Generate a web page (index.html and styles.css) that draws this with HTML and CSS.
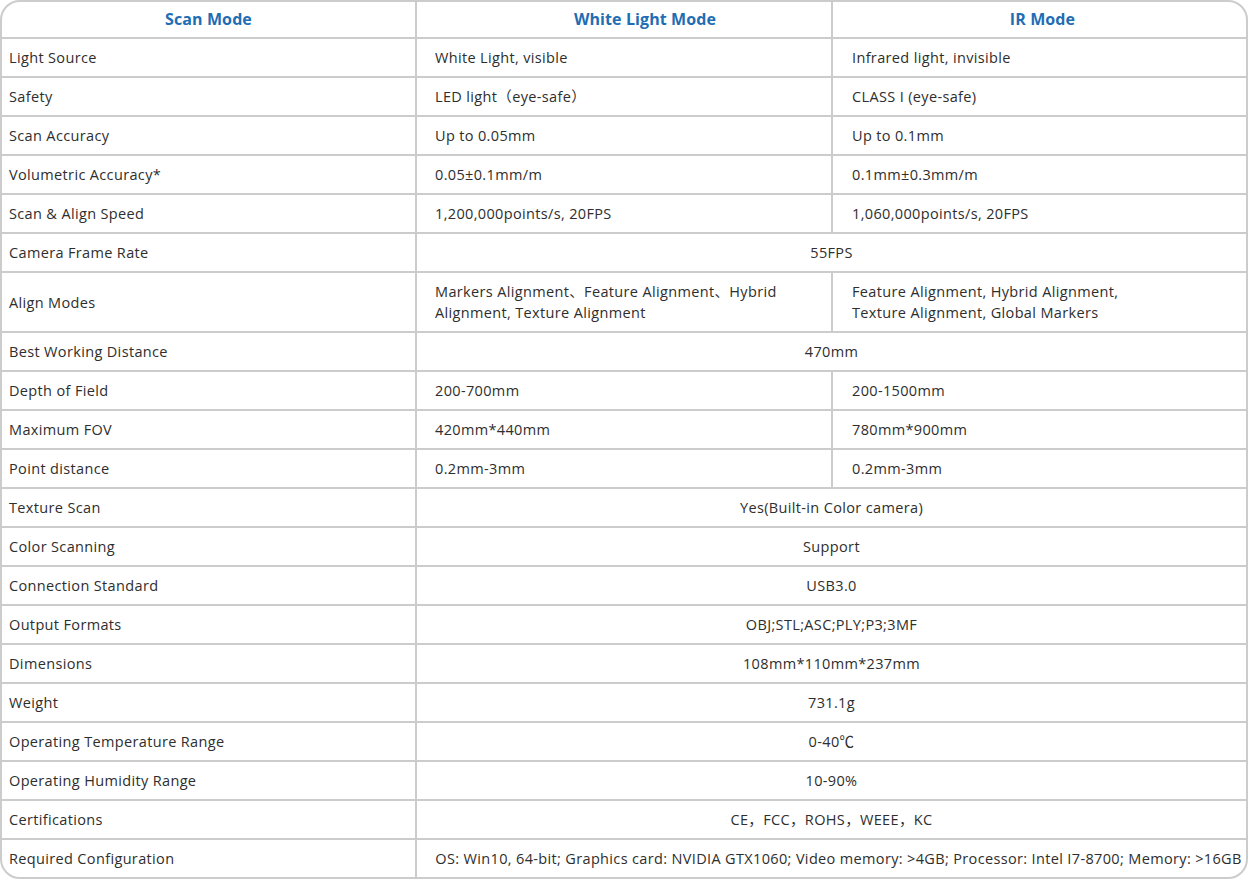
FILE: index.html
```html
<!DOCTYPE html>
<html lang="en">
<head>
<meta charset="utf-8">
<title>Specs</title>
<link rel="stylesheet" href="styles.css">
</head>
<body>
<div class="frame">
<table class="spec">
<colgroup><col class="c1"><col class="c2"><col class="c3"></colgroup>
<thead>
<tr><th>Scan Mode</th><th class="shift">White Light Mode</th><th>IR Mode</th></tr>
</thead>
<tbody>
<tr><td>Light Source</td><td>White Light, visible</td><td>Infrared light, invisible</td></tr>
<tr><td>Safety</td><td>LED light（eye-safe）</td><td>CLASS I (eye-safe)</td></tr>
<tr><td>Scan Accuracy</td><td>Up to 0.05mm</td><td>Up to 0.1mm</td></tr>
<tr><td>Volumetric Accuracy*</td><td>0.05±0.1mm/m</td><td>0.1mm±0.3mm/m</td></tr>
<tr><td>Scan &amp; Align Speed</td><td>1,200,000points/s, 20FPS</td><td>1,060,000points/s, 20FPS</td></tr>
<tr><td>Camera Frame Rate</td><td colspan="2" class="mid">55FPS</td></tr>
<tr><td>Align Modes</td><td>Markers Alignment、Feature Alignment、Hybrid<br>Alignment, Texture Alignment</td><td>Feature Alignment, Hybrid Alignment,<br>Texture Alignment, Global Markers</td></tr>
<tr><td>Best Working Distance</td><td colspan="2" class="mid">470mm</td></tr>
<tr><td>Depth of Field</td><td>200-700mm</td><td>200-1500mm</td></tr>
<tr><td>Maximum FOV</td><td>420mm*440mm</td><td>780mm*900mm</td></tr>
<tr><td>Point distance</td><td>0.2mm-3mm</td><td>0.2mm-3mm</td></tr>
<tr><td>Texture Scan</td><td colspan="2" class="mid">Yes(Built-in Color camera)</td></tr>
<tr><td>Color Scanning</td><td colspan="2" class="mid">Support</td></tr>
<tr><td>Connection Standard</td><td colspan="2" class="mid">USB3.0</td></tr>
<tr><td>Output Formats</td><td colspan="2" class="mid">OBJ;STL;ASC;PLY;P3;3MF</td></tr>
<tr><td>Dimensions</td><td colspan="2" class="mid">108mm*110mm*237mm</td></tr>
<tr><td>Weight</td><td colspan="2" class="mid">731.1g</td></tr>
<tr><td>Operating Temperature Range</td><td colspan="2" class="mid">0-40℃</td></tr>
<tr><td>Operating Humidity Range</td><td colspan="2" class="mid">10-90%</td></tr>
<tr><td>Certifications</td><td colspan="2" class="mid">CE，FCC，ROHS，WEEE，KC</td></tr>
<tr><td>Required Configuration</td><td colspan="2" class="mid tight">OS: Win10, 64-bit; Graphics card: NVIDIA GTX1060; Video memory: &gt;4GB; Processor: Intel I7-8700; Memory: &gt;16GB</td></tr>
</tbody>
</table>
</div>
</body>
</html>
```
FILE: styles.css
```css
html, body {
  margin: 0;
  padding: 0;
  background: #ffffff;
}
body {
  font-family: "Open Sans", "Noto Sans CJK SC", sans-serif;
  color: #2e2e2e;
}
.frame {
  width: 1248px;
  box-sizing: border-box;
  border: 2px solid #cccccc;
  border-radius: 20px;
  overflow: hidden;
}
.spec {
  width: 100%;
  table-layout: fixed;
  border-collapse: separate;
  border-spacing: 0;
  font-size: 14.5px;
  letter-spacing: 0.35px;
  line-height: 21px;
}
.c1 { width: 415px; }
.c2 { width: 416px; }
.c3 { width: auto; }
.spec th,
.spec td {
  border-right: 2px solid #cccccc;
  border-bottom: 2px solid #cccccc;
  padding: 8px 6px 8px 18px;
  text-align: left;
  font-weight: 400;
  vertical-align: middle;
}
.spec th:last-child,
.spec td:last-child {
  border-right: none;
}
.spec tbody tr:last-child td {
  border-bottom: none;
}
.spec td:first-child {
  padding-left: 7px;
}
.spec td:nth-child(3) {
  padding-left: 19px;
}
.spec th {
  text-align: center;
  color: #1f6db3;
  font-weight: 700;
  font-size: 16px;
  letter-spacing: 0.1px;
  line-height: 21px;
  padding: 7px 0 7px 0;
}
.spec th.shift {
  padding-left: 42px;
}
.spec th:last-child {
  padding-left: 6px;
}
.spec td.mid {
  text-align: center;
  padding-left: 0;
  padding-right: 0;
}
.spec td.tight {
  white-space: nowrap;
  padding-left: 14px;
  padding-right: 0;
}
```
